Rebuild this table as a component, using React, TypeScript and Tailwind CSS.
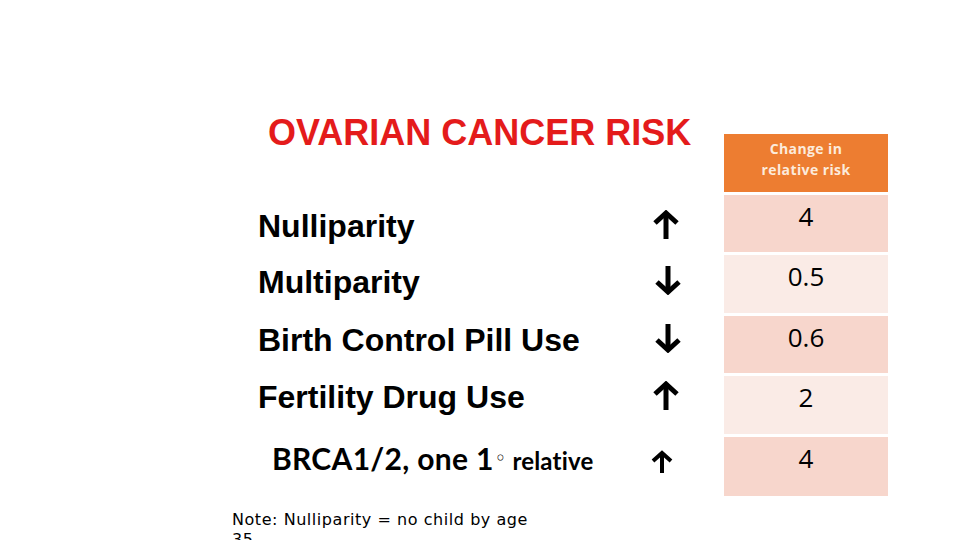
import React from "react";

type Dir = "up" | "down";

function Arrow({ dir, small }: { dir: Dir; small?: boolean }) {
  const w = small ? 22 : 26;
  const h = small ? 23 : 29;
  const sw = small ? 4 : 5;
  const mid = w / 2;
  const head = small ? 9 : 11;
  return (
    <svg
      width={w}
      height={h}
      viewBox={`0 0 ${w} ${h}`}
      className={dir === "down" ? "rotate-180" : ""}
    >
      <line x1={mid} y1={3} x2={mid} y2={h} stroke="#000" strokeWidth={sw} />
      <polyline
        points={`${mid - head},${head + 2} ${mid},3 ${mid + head},${head + 2}`}
        fill="none"
        stroke="#000"
        strokeWidth={sw}
        strokeLinejoin="miter"
      />
    </svg>
  );
}

const rows: { label: string; dir: Dir; top: string }[] = [
  { label: "Nulliparity", dir: "up", top: "mt-[59px]" },
  { label: "Multiparity", dir: "down", top: "mt-[24px]" },
  { label: "Birth Control Pill Use", dir: "down", top: "mt-[26px]" },
  { label: "Fertility Drug Use", dir: "up", top: "mt-[25px]" },
];

const values = [
  { v: "4", bg: "bg-[#f7d6cc]", h: "h-[57px]" },
  { v: "0.5", bg: "bg-[#faebe6]", h: "h-[58px]" },
  { v: "0.6", bg: "bg-[#f7d6cc]", h: "h-[57px]" },
  { v: "2", bg: "bg-[#faebe6]", h: "h-[58px]" },
  { v: "4", bg: "bg-[#f7d6cc]", h: "h-[59px]" },
];

export default function App() {
  return (
    <div className="w-[960px] h-[540px] bg-white overflow-hidden flex flex-row">
      <div className="ml-[232px] w-[468px] flex flex-col">
        <h1 className="mt-[115px] ml-[36px] h-[36px] text-[36px] leading-[36px] font-bold text-[#e41b1b] font-['Liberation_Sans',Arial,sans-serif] whitespace-nowrap">
          OVARIAN CANCER RISK
        </h1>

        {rows.map((r) => (
          <div key={r.label} className={`${r.top} h-[32px] flex flex-row items-start`}>
            <div className="pl-[26px] w-[421px] text-[32px] leading-[32px] font-bold text-black font-['Liberation_Sans',Arial,sans-serif] whitespace-nowrap">
              {r.label}
            </div>
            <div className={r.dir === "down" ? "ml-[2px]" : ""}>
              <Arrow dir={r.dir} />
            </div>
          </div>
        ))}

        <div className="mt-[31px] h-[29px] flex flex-row items-start">
          <div className="pl-[40px] w-[419px] flex flex-row items-baseline font-bold text-black font-['Lato',sans-serif] whitespace-nowrap">
            <span className="text-[30px] leading-[29px] tracking-[0.3px]">BRCA1/2, one 1</span>
            <span className="ml-[1px] mr-[6px] text-[20px] leading-[14px] font-normal relative -top-[5px] font-['DejaVu_Sans',sans-serif]">
              ◦
            </span>
            <span className="text-[24px] leading-[29px] tracking-[0.2px]">relative</span>
          </div>
          <div className="mt-[6px]">
            <Arrow dir="up" small />
          </div>
        </div>

        <div className="mt-[37px] text-[16px] leading-[20px] tracking-[0.55px] text-black font-['DejaVu_Sans',sans-serif]">
          <div>Note: Nulliparity = no child by age</div>
          <div>35</div>
        </div>
      </div>

      <div className="ml-[24px] mt-[134px] w-[164px] flex flex-col gap-[3px]">
        <div className="h-[58px] pb-[8px] bg-[#ed7d31] flex flex-col items-center justify-center text-[14px] leading-[21px] font-bold tracking-[0.4px] text-[#fcebdc] font-['Open_Sans',sans-serif]">
          <span>Change in</span>
          <span>relative risk</span>
        </div>
        {values.map((c, i) => (
          <div
            key={i}
            className={`${c.h} ${c.bg} pt-2 text-center text-[26px] leading-[26px] text-black font-['Open_Sans',sans-serif]`}
          >
            {c.v}
          </div>
        ))}
      </div>
    </div>
  );
}
